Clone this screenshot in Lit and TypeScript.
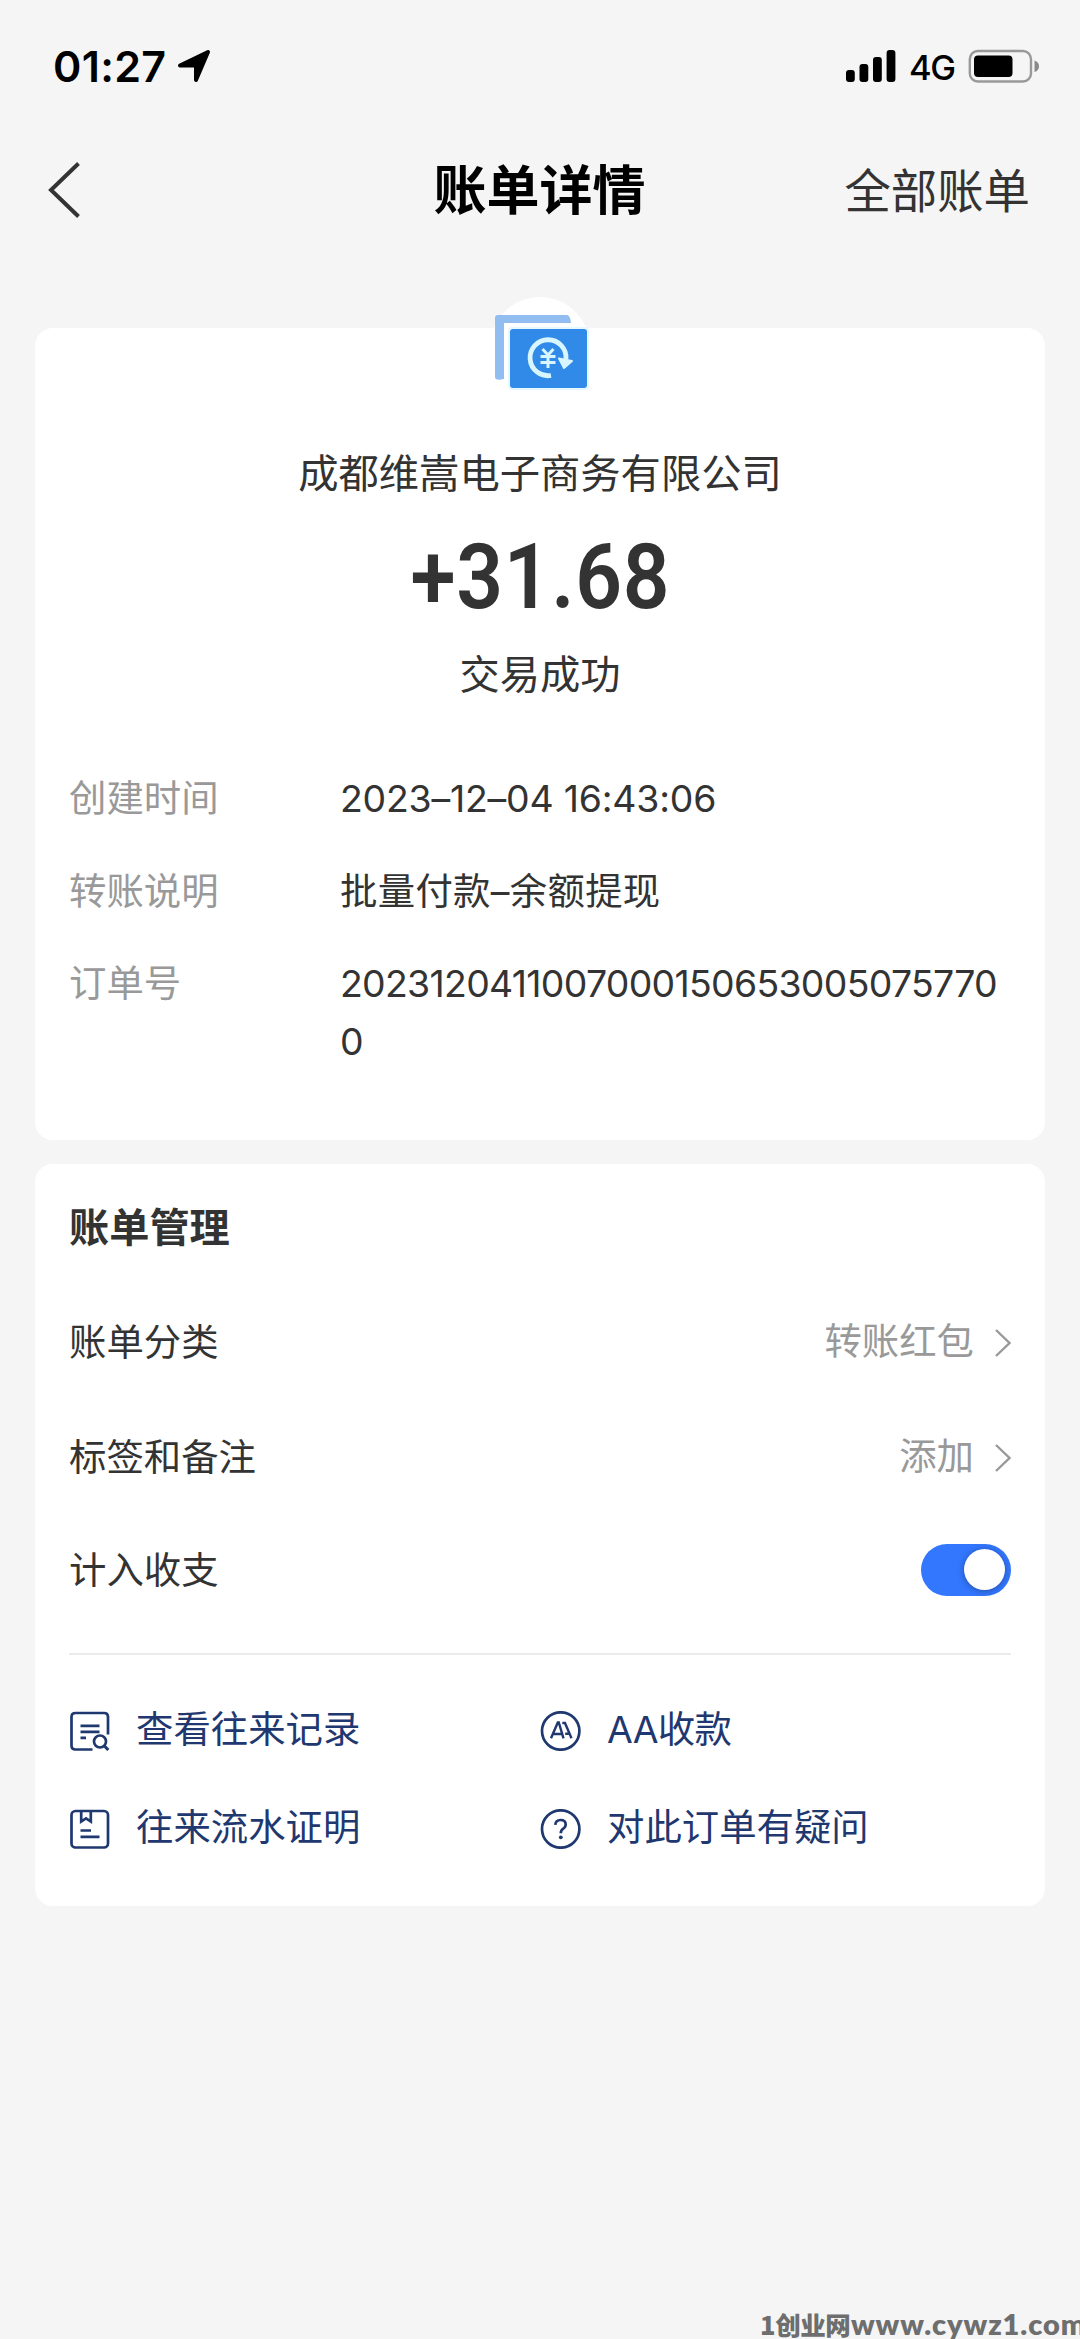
import { LitElement, html, css, svg } from "lit";
import { customElement, property } from "lit/decorators.js";

const chevron = html`<svg class="chevron" width="17" height="30" viewBox="0 0 17 30">
  <path d="M2 2 L15.5 15 L2 28" fill="none" stroke="#999" stroke-width="2.4" />
</svg>`;

const linkIcons: Record<string, unknown> = {
  records: svg`
    <path d="M39 23.5 V6 Q39 2 35 2 H6.5 Q2.5 2 2.5 6 V34.5 Q2.5 38.5 6.5 38.5 H23.5" />
    <path d="M11.5 14.8 H30.5 M11.5 20.8 H30.5 M11.5 26.8 H17" />
    <circle cx="31" cy="30.5" r="6" />
    <path d="M35.2 34.7 L39.3 39" stroke-width="3" />`,
  proof: svg`
    <rect x="2.5" y="2" width="36.5" height="36.5" rx="4" />
    <path d="M12.2 2 V12.5 L17 9.3 L21.8 12.5 V2" />
    <path d="M11.5 21.5 H22 M11.5 27.8 H30.5" />`,
  aa: svg`
    <circle cx="20.7" cy="20" r="18.7" />
    <path d="M11 27.3 L17.8 11.5 H18.8 L23.5 27.3 M13.5 23 H22 M22.3 12 H25 L31.5 27.3 M25.2 22.8 H28.5" stroke-width="2.4" />`,
  question: svg`
    <circle cx="20.7" cy="20" r="18.7" />
    <path d="M15.3 15.8 Q15.7 11 20.5 11 Q25.7 11 25.7 15.6 Q25.7 18.2 23 19.8 Q20.8 21.2 20.8 24.2" />
    <circle cx="20.8" cy="28.3" r="1.9" fill="currentColor" stroke="none" />`,
};

@customElement("status-bar")
class StatusBar extends LitElement {
  static styles = css`
    :host {
      display: flex;
      align-items: center;
      height: 132px;
      padding: 0 40px 0 53px;
      box-sizing: border-box;
      color: #000;
      font-family: Inter, sans-serif;
    }
    .time {
      font-size: 43px;
      font-weight: 600;
      line-height: 60px;
      letter-spacing: 0.3px;
      width: 124px;
      white-space: nowrap;
    }
    .spacer {
      flex: 1;
    }
    .network {
      font-size: 34.5px;
      font-weight: 500;
      line-height: 50px;
      letter-spacing: -1.5px;
      width: 59px;
      padding: 3px 0 0 13px;
      box-sizing: content-box;
    }
    svg {
      display: block;
    }
  `;
  render() {
    return html`
      <span class="time">01:27</span>
      <svg width="34" height="34" viewBox="0 0 34 34">
        <path d="M31 3 L19 31 V16.5 H3 Z" fill="#000" stroke="#000" stroke-width="4" stroke-linejoin="round" />
      </svg>
      <span class="spacer"></span>
      <svg width="50" height="32" viewBox="0 0 50 32">
        <rect x="0" y="20" width="8.8" height="12" rx="3" />
        <rect x="13.5" y="14" width="8.8" height="18" rx="3" />
        <rect x="27" y="7" width="8.8" height="25" rx="3" />
        <rect x="40.6" y="0" width="8.8" height="32" rx="3" />
      </svg>
      <span class="network">4G</span>
      <svg width="72" height="34" viewBox="0 0 72 34">
        <rect x="1.8" y="2" width="61.2" height="30.5" rx="8" fill="none" stroke="#999" stroke-width="2.4" />
        <rect x="6" y="6.5" width="38.5" height="21.5" rx="4" />
        <path d="M66.5 11.5 Q71 13 71 17.2 Q71 21.5 66.5 23 Z" fill="#8a8a8a" />
      </svg>
    `;
  }
}

@customElement("detail-row")
class DetailRow extends LitElement {
  @property() label = "";
  @property() value = "";
  static styles = css`
    :host {
      display: grid;
      grid-template-columns: 271px 1fr;
      font-size: 37.4px;
      line-height: 57.5px;
    }
    .label {
      color: #999;
    }
    .value {
      color: #333;
      overflow-wrap: anywhere;
    }
    :host(.date) .value {
      letter-spacing: -0.2px;
    }
    :host(.note) .value {
      letter-spacing: 0.3px;
    }
    :host(.order) .value {
      letter-spacing: -0.69px;
    }
  `;
  render() {
    return html`<span class="label">${this.label}</span><span class="value">${this.value}</span>`;
  }
}

@customElement("app-root")
class AppRoot extends LitElement {
  static styles = css`
    :host {
      display: block;
      position: relative;
      width: 1080px;
      height: 2339px;
      overflow: hidden;
      background: #f5f5f5;
      color: #333;
      font-family: Inter, "Noto Sans CJK SC", sans-serif;
    }
    svg {
      display: block;
    }
    .nav {
      display: grid;
      grid-template-columns: 1fr auto 1fr;
      align-items: center;
      height: 117px;
      padding: 0 49px 0 48px;
    }
    .back {
      margin: -1px 0 0 -3px;
    }
    .title {
      font-size: 53px;
      line-height: 80px;
      font-weight: 700;
      color: #000;
    }
    .all {
      justify-self: end;
      font-size: 46.4px;
      line-height: 80px;
      padding-right: 1px;
    }
    .main {
      display: flex;
      flex-direction: column;
      gap: 24px;
      padding: 79px 35px 0;
    }
    .card {
      position: relative;
      background: #fff;
      border-radius: 18px;
      padding: 0 34px;
    }
    .badge {
      position: absolute;
      top: -31px;
      left: 455px;
    }
    .summary {
      display: flex;
      flex-direction: column;
      align-items: center;
      padding-top: 116px;
      font-size: 40.3px;
      line-height: 60px;
    }
    .amount {
      margin: 25px 0 20px;
      font-family: Roboto, sans-serif;
      font-weight: 570;
      font-size: 91px;
      line-height: 96px;
      letter-spacing: 0.8px;
      transform: scaleX(0.9);
    }
    .details {
      display: flex;
      flex-direction: column;
      gap: 35px;
      padding: 65px 0 70px;
    }
    .manage {
      padding-top: 34px;
      padding-bottom: 28px;
      font-size: 37.4px;
      line-height: 56px;
    }
    .heading {
      font-size: 40.2px;
      line-height: 60px;
      font-weight: 700;
      margin-bottom: 27px;
    }
    .row {
      display: flex;
      align-items: center;
      justify-content: space-between;
      height: 115px;
    }
    .row.last {
      height: 111px;
    }
    .row.last .switch {
      margin-top: -2px;
    }
    .extra {
      display: flex;
      align-items: center;
      gap: 20px;
      color: #999;
    }
    .extra-text {
      padding-bottom: 2px;
    }
    .switch {
      display: flex;
      justify-content: flex-end;
      align-items: center;
      width: 90px;
      height: 52px;
      border-radius: 26px;
      background: #3377ff;
      padding-right: 6px;
      box-sizing: border-box;
    }
    .knob {
      width: 41px;
      height: 41px;
      border-radius: 50%;
      background: #fff;
      box-shadow: 0 1px 7px rgba(0, 0, 0, 0.35);
    }
    .divider {
      height: 2px;
      background: #ebebeb;
      margin: 27px 0;
    }
    .links {
      display: grid;
      grid-template-columns: 471px 1fr;
      grid-auto-rows: 98px;
      align-items: center;
      color: #1f3870;
    }
    .link {
      display: flex;
      align-items: center;
      gap: 26px;
    }
    .link-text {
      padding-bottom: 2px;
    }
    .link-text.tight {
      letter-spacing: -0.7px;
    }
    .glyph {
      fill: none;
      stroke: currentColor;
      stroke-width: 2.7;
    }
    .mark {
      position: absolute;
      left: 760px;
      top: 2310px;
      display: flex;
      align-items: center;
      white-space: nowrap;
      color: #6e6e6e;
      font-family: Lato, "Noto Sans CJK SC", sans-serif;
      font-weight: 700;
      font-size: 29px;
      line-height: 28px;
    }
    .mark-cjk {
      font-family: "Noto Sans CJK SC", sans-serif;
      font-weight: 900;
      font-size: 25.5px;
      width: 91px;
      letter-spacing: -0.4px;
    }
    .mark-url {
      font-weight: 800;
      letter-spacing: 0.9px;
    }
  `;

  private link(icon: string, text: string) {
    return html`<div class="link">
      <svg class="glyph" width="41" height="40" viewBox="0 0 41 40">${linkIcons[icon]}</svg>
      <span class="link-text ${icon === "aa" ? "tight" : ""}">${text}</span>
    </div>`;
  }

  render() {
    return html`
      <status-bar></status-bar>
      <header class="nav">
        <svg class="back" width="36" height="56" viewBox="0 0 36 56">
          <path d="M33.5 1.5 L6 28 L33.5 54.5" fill="none" stroke="#333" stroke-width="4" />
        </svg>
        <span class="title">账单详情</span>
        <span class="all">全部账单</span>
      </header>
      <main class="main">
        <section class="card">
          <svg class="badge" width="100" height="100" viewBox="0 0 100 100">
            <circle cx="50" cy="50" r="50" fill="#fff" />
            <path d="M5 21 Q5 18 8 18 H77 Q80 18 81 26 H14 V82 Q5 84 5 80 Z" fill="#92bdf0" />
            <rect x="18" y="30" width="81" height="63" rx="4" fill="#e6f8ff" />
            <rect x="20" y="32" width="77" height="59" rx="3" fill="#3189e8" />
            <g fill="none" stroke="#d8f6ff">
              <path d="M61 78.5 A18 18 0 1 1 76 62" stroke-width="4.8" />
              <path d="M52.5 52 L58 58 L63.5 52 M58 58 V71 M50.5 59.5 H65.5 M50.5 65.5 H65.5" stroke-width="3" />
            </g>
            <path d="M69 61.5 L82 64 L74 71 Z" fill="#d8f6ff" stroke="#d8f6ff" stroke-width="2" stroke-linejoin="round" />
          </svg>
          <div class="summary">
            <div>成都维嵩电子商务有限公司</div>
            <div class="amount">+31.68</div>
            <div>交易成功</div>
          </div>
          <div class="details">
            <detail-row class="date" label="创建时间" value="2023–12–04 16:43:06"></detail-row>
            <detail-row class="note" label="转账说明" value="批量付款–余额提现"></detail-row>
            <detail-row class="order" label="订单号" value="20231204110070001506530050757700"></detail-row>
          </div>
        </section>
        <section class="card manage">
          <div class="heading">账单管理</div>
          <div class="row">
            <span>账单分类</span>
            <span class="extra"><span class="extra-text">转账红包</span>${chevron}</span>
          </div>
          <div class="row">
            <span>标签和备注</span>
            <span class="extra"><span class="extra-text">添加</span>${chevron}</span>
          </div>
          <div class="row last">
            <span>计入收支</span>
            <span class="switch"><span class="knob"></span></span>
          </div>
          <div class="divider"></div>
          <div class="links">
            ${this.link("records", "查看往来记录")} ${this.link("aa", "AA收款")}
            ${this.link("proof", "往来流水证明")} ${this.link("question", "对此订单有疑问")}
          </div>
        </section>
      </main>
      <div class="mark"><span class="mark-cjk">1创业网</span><span class="mark-url">www.cywz1.com</span></div>
    `;
  }
}
